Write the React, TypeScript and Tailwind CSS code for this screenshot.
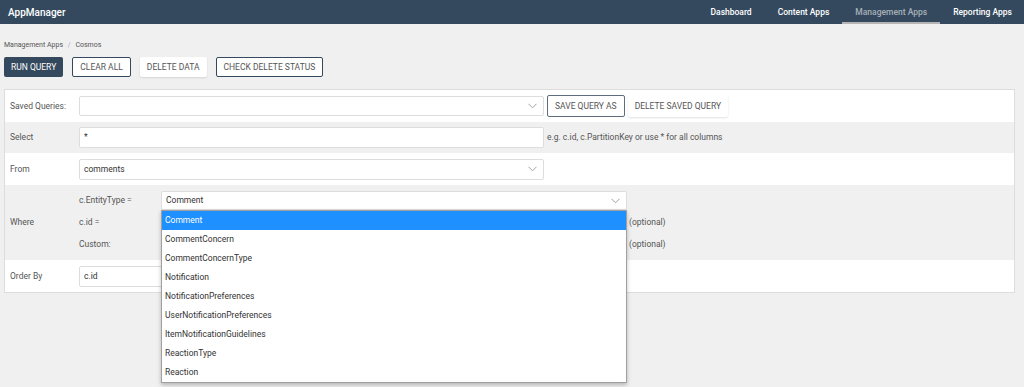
import React from "react"

const entityTypes = [
  "Comment",
  "CommentConcern",
  "CommentConcernType",
  "Notification",
  "NotificationPreferences",
  "UserNotificationPreferences",
  "ItemNotificationGuidelines",
  "ReactionType",
  "Reaction",
]

function Chevron() {
  return (
    <svg width="9" height="6" viewBox="0 0 9 6" className="text-[#a0a0a0]">
      <path d="M0.5 0.8 L4.5 4.8 L8.5 0.8" fill="none" stroke="currentColor" strokeWidth="1" />
    </svg>
  )
}

function SelectBox({ value = "", className = "" }: { value?: string; className?: string }) {
  return (
    <div
      className={`flex items-center justify-between rounded-[2px] border border-[#ddd] bg-white pl-[4px] pr-[6px] text-[#333] ${className}`}
    >
      <span>{value}</span>
      <Chevron />
    </div>
  )
}

function TextBox({ value = "", className = "" }: { value?: string; className?: string }) {
  return (
    <div className={`flex items-center rounded-[2px] border border-[#ddd] bg-white pl-[4px] text-[#333] ${className}`}>
      {value}
    </div>
  )
}

function Row({ label, shaded, height, children }: { label: string; shaded?: boolean; height: string; children: React.ReactNode }) {
  return (
    <div className={`flex items-center ${height} ${shaded ? "bg-[#f0f0f0]" : "bg-white"}`}>
      <div className="w-[74px] shrink-0 pl-[5px] text-[#555]">{label}</div>
      {children}
    </div>
  )
}

const outlineBtn = "h-[20px] rounded-[2px] border border-[#34495e] bg-white px-[7px] uppercase text-[#555]"
const flatBtn = "h-[20px] rounded-[2px] bg-white px-[7px] uppercase text-[#555] shadow-[0_1px_2px_rgba(0,0,0,0.12)]"

export default function App() {
  return (
    <div className="min-h-[387px] bg-[#f0f0f0] font-[family-name:Roboto,sans-serif] text-[8.5px]">
      <header className="flex h-[24px] items-stretch justify-between bg-[#34495e] text-white">
        <div className="flex items-center pl-[8px] text-[10px] font-medium">AppManager</div>
        <nav className="flex items-stretch text-[8.5px] font-medium">
          <a className="flex items-center px-[13px]">Dashboard</a>
          <a className="flex items-center px-[13px]">Content Apps</a>
          <a className="flex items-center border-b-2 border-[#b5b5b5] px-[13px] pt-[2px] text-[#a8b0b8]">Management Apps</a>
          <a className="flex items-center pl-[13px] pr-[12px]">Reporting Apps</a>
        </nav>
      </header>

      <div className="pl-[4px] pt-[16px] text-[7px] leading-[10px] text-[#555]">
        Management Apps <span className="mx-[3px] text-[#aaa]">/</span> Cosmos
      </div>

      <div className="mt-[7px] flex gap-[9px] pl-[4px] text-[8.5px]">
        <button className="h-[20px] rounded-[2px] bg-[#34495e] px-[7px] uppercase text-white">Run Query</button>
        <button className={outlineBtn}>Clear All</button>
        <button className={flatBtn}>Delete Data</button>
        <button className={outlineBtn}>Check Delete Status</button>
      </div>

      <div className="ml-[4px] mr-[9px] mt-[12px] border border-[#ddd] bg-white">
        <Row label="Saved Queries:" height="h-[32px]">
          <SelectBox className="h-[20px] w-[465px]" />
          <button className="ml-[3px] h-[22px] rounded-[2px] border border-[#5d6d7e] bg-white px-[7px] uppercase text-[#555]">
            Save Query As
          </button>
          <button className="ml-[3px] h-[22px] rounded-[2px] bg-white px-[7px] uppercase text-[#555] shadow-[0_1px_2px_rgba(0,0,0,0.12)]">
            Delete Saved Query
          </button>
        </Row>
        <Row label="Select" shaded height="h-[31px]">
          <TextBox value="*" className="h-[21px] w-[465px]" />
          <span className="ml-[3px] text-[#555]">e.g. c.id, c.PartitionKey or use * for all columns</span>
        </Row>
        <Row label="From" height="h-[32px]">
          <SelectBox value="comments" className="h-[21px] w-[465px]" />
        </Row>
        <Row label="Where" shaded height="h-[75px]">
          <div className="flex flex-col">
            <div className="flex h-[22px] items-center">
              <div className="w-[82px] text-[#555]">c.EntityType =</div>
              <div className="relative">
                <SelectBox value="Comment" className="h-[19px] w-[466px] border-[#bbb]" />
                <ul className="absolute left-0 top-full z-10 w-[466px] border border-[#a0a0a0] bg-white text-[#333] shadow-[0_2px_4px_rgba(0,0,0,0.25)]">
                  {entityTypes.map((t, i) => (
                    <li
                      key={t}
                      className={`flex h-[19px] items-center pl-[3px] ${i === 0 ? "bg-[#1e90ff] text-white" : ""}`}
                    >
                      {t}
                    </li>
                  ))}
                </ul>
              </div>
            </div>
            <div className="flex h-[22px] items-center">
              <div className="w-[82px] text-[#555]">c.id =</div>
              <TextBox className="h-[19px] w-[466px]" />
              <span className="ml-[2px] text-[#555]">(optional)</span>
            </div>
            <div className="flex h-[22px] items-center">
              <div className="w-[82px] text-[#555]">Custom:</div>
              <TextBox className="h-[19px] w-[466px]" />
              <span className="ml-[2px] text-[#555]">(optional)</span>
            </div>
          </div>
        </Row>
        <Row label="Order By" height="h-[32px]">
          <TextBox value="c.id" className="h-[21px] w-[465px]" />
        </Row>
      </div>
    </div>
  )
}
